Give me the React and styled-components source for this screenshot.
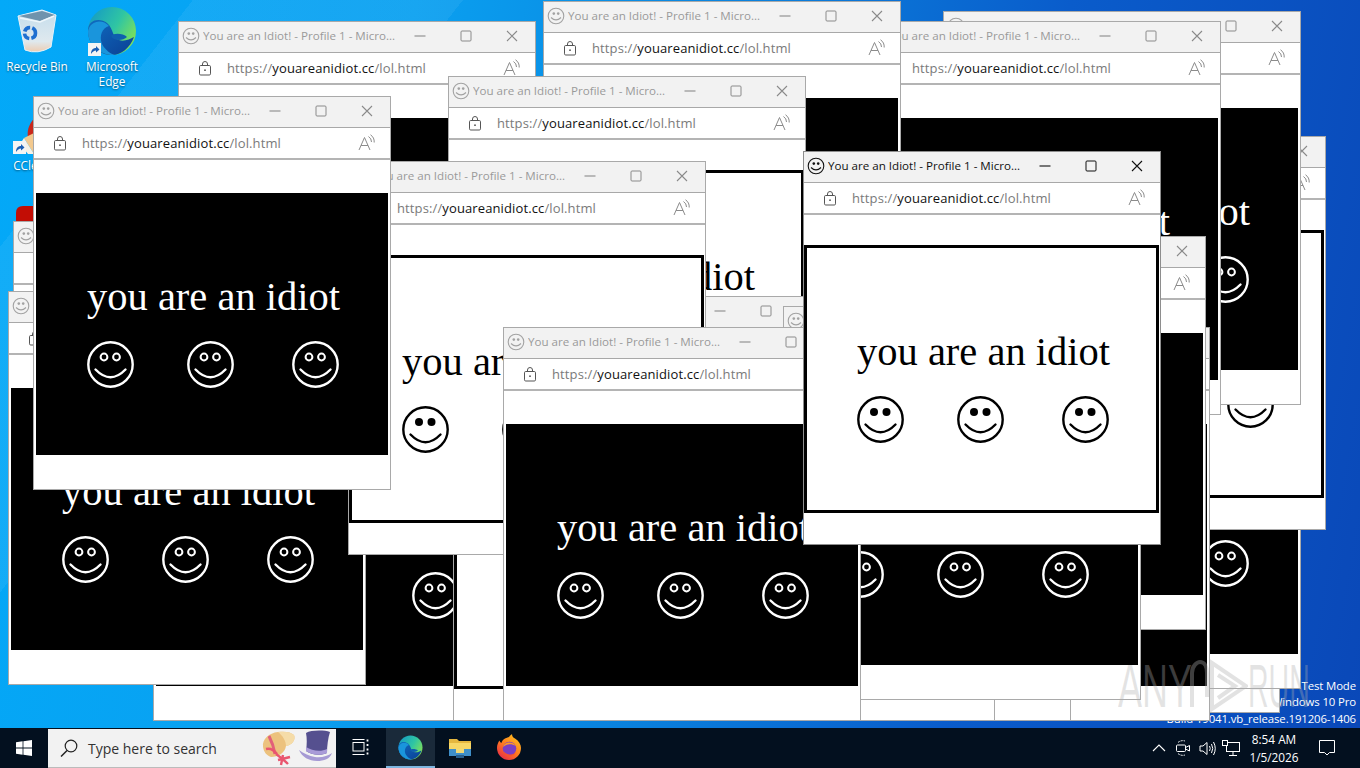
import styled, { createGlobalStyle } from "styled-components";

const GlobalStyle = createGlobalStyle`
  html, body {
    margin: 0;
    padding: 0;
    width: 1360px;
    height: 768px;
    overflow: hidden;
  }
  body {
    font-family: "Open Sans", "Noto Sans", "Liberation Sans", sans-serif;
  }
`;

const Screen = styled.div`
  width: 1360px;
  height: 768px;
  display: flex;
  flex-direction: column;
  overflow: hidden;
`;

const Desktop = styled.div`
  position: relative;
  flex: 1;
  overflow: hidden;
  background:
    linear-gradient(128deg, transparent 0 10%, rgba(255, 255, 255, 0.06) 10% 24%, transparent 24%),
    linear-gradient(100deg, #03a9f8 0%, #0aa0f0 28%, #0a7fdc 52%, #0a5ccb 72%, #0a48b8 100%);
`;

const DesktopIcon = styled.div`
  position: absolute;
  left: ${(p) => p.$x}px;
  top: ${(p) => p.$y}px;
  width: 74px;
  display: flex;
  flex-direction: column;
  align-items: center;
  color: #fff;
  font-size: 11.8px;
  line-height: 15px;
  text-align: center;
  text-shadow: 0 1px 2px rgba(0, 0, 0, 0.5);
`;

const IconLabel = styled.span`
  margin-top: ${(p) => p.$gap || 0}px;
`;

const Watermark = styled.div`
  position: absolute;
  left: 1118px;
  top: 654px;
  display: flex;
  align-items: center;
  font-family: "Liberation Sans", sans-serif;
  font-size: 62px;
  line-height: 64px;
  color: rgba(175, 175, 175, 0.34);
  pointer-events: none;
`;

const WatermarkWord = styled.span`
  display: block;
  width: ${(p) => p.$width}px;
  white-space: nowrap;
  transform: scaleX(${(p) => p.$scale});
  transform-origin: left center;
`;

const BuildInfo = styled.div`
  position: absolute;
  right: 4px;
  bottom: 1px;
  color: #fff;
  font-size: 11.4px;
  letter-spacing: -0.12px;
  line-height: 16.5px;
  text-align: right;
`;

/* ===== browser popup ===== */
const Win = styled.div`
  position: absolute;
  left: ${(p) => p.$x}px;
  top: ${(p) => p.$y}px;
  width: 358px;
  height: 394px;
  box-sizing: border-box;
  border: 1px solid ${(p) => (p.$active ? "#8e8e8e" : "#a9a9a9")};
  background: #fff;
  overflow: hidden;
`;

const TitleBar = styled.div`
  height: 27px;
  padding-bottom: 3px;
  display: flex;
  align-items: center;
  background: #f2f2f2;
  border-bottom: 1px solid #a8a8a8;
  color: ${(p) => (p.$active ? "#111" : "#9a9a9a")};
`;

const TabIcon = styled.span`
  width: 24px;
  padding-left: 3px;
  box-sizing: border-box;
  display: flex;
  flex: none;
`;

const TitleText = styled.span`
  flex: 1;
  font-size: 11.6px;
  white-space: nowrap;
  overflow: hidden;
`;

const WinButton = styled.span`
  width: 46px;
  height: 27px;
  flex: none;
  display: flex;
  align-items: center;
  justify-content: center;
  color: ${(p) => (p.$active ? "#111" : "#8a8a8a")};
`;

const AddressBar = styled.div`
  height: 29px;
  padding-bottom: 1px;
  display: flex;
  align-items: center;
  background: #fff;
  border-bottom: 2px solid #b4b4b4;
`;

const LockSlot = styled.span`
  width: 48px;
  padding-left: 19px;
  box-sizing: border-box;
  display: flex;
  flex: none;
`;

const Url = styled.span`
  flex: 1;
  font-size: 13px;
  letter-spacing: 0.12px;
  color: #7a7a7a;
  white-space: nowrap;
`;

const UrlHost = styled.span`
  color: #111;
`;

const ReadSlot = styled.span`
  width: 46px;
  display: flex;
  justify-content: center;
  flex: none;
`;

const PageWrap = styled.div`
  padding: 30px 0 0 ${(p) => (p.$dark ? 1 : 0)}px;
`;

const PageBox = styled.div`
  width: ${(p) => (p.$dark ? 354 : 355)}px;
  height: 268px;
  box-sizing: border-box;
  border-style: solid;
  border-width: ${(p) => (p.$dark ? "3px 1px" : "3px 3px")};
  border-color: ${(p) => (p.$dark ? "#fff" : "#000")};
  background: ${(p) => (p.$dark ? "#000" : "#fff")};
  color: ${(p) => (p.$dark ? "#fff" : "#000")};
  padding-left: ${(p) => (p.$dark ? 51 : 50)}px;
`;

const Slogan = styled.div`
  margin-top: 74px;
  font-family: "Liberation Serif", "Times New Roman", serif;
  font-size: 40.5px;
  line-height: 60px;
  white-space: nowrap;
`;

const SmileyRow = styled.div`
  margin-top: 14px;
  display: flex;
  svg:nth-child(2) {
    margin: 0 58px 0 53px;
  }
`;

/* ===== taskbar ===== */
const Taskbar = styled.div`
  height: 40px;
  flex: none;
  display: flex;
  align-items: stretch;
  background: #03101f;
  color: #fff;
`;

const StartButton = styled.div`
  width: 48px;
  display: flex;
  align-items: center;
  justify-content: center;
`;

const SearchBox = styled.div`
  width: 288px;
  margin-top: 1px;
  box-sizing: border-box;
  display: flex;
  align-items: center;
  background: #f2f2f2;
  color: #333;
  font-size: 14px;
  padding: 0 3px 0 12px;
  border-bottom: 1px solid #bbb;
`;

const SearchText = styled.span`
  margin-left: 10px;
  flex: 1;
  white-space: nowrap;
`;

const TaskButton = styled.div`
  width: 49.5px;
  display: flex;
  align-items: center;
  justify-content: center;
  box-sizing: border-box;
  background: ${(p) => (p.$current ? "#1a2a3a" : "transparent")};
  border-bottom: 2px solid ${(p) => (p.$current ? "#7fb6e0" : "transparent")};
`;

const Tray = styled.div`
  margin-left: auto;
  margin-right: 11px;
  display: flex;
  align-items: stretch;
`;

const TraySlot = styled.div`
  width: 24px;
  display: flex;
  align-items: center;
  justify-content: center;
`;

const Clock = styled.div`
  width: 62px;
  display: flex;
  flex-direction: column;
  justify-content: center;
  align-items: center;
  font-size: 11.8px;
  line-height: 18px;
`;

const NotifySlot = styled.div`
  width: 44px;
  display: flex;
  align-items: center;
  justify-content: center;
`;

/* ===== drawings ===== */
const TabSmiley = ({ active }) => {
  const c = active ? "#111" : "#a2a2a2";
  return (
    <svg width="18" height="18" viewBox="0 0 18 18" fill="none">
      <circle cx="9" cy="9" r="7.8" stroke={c} strokeWidth="1.1" />
      <circle cx="6.8" cy="6.6" r="1.3" fill={c} />
      <circle cx="11.2" cy="6.6" r="1.3" fill={c} />
      <path d="M4 10.5 Q9 15.2 14 10.5" stroke={c} strokeWidth="1.1" />
    </svg>
  );
};

const BigSmiley = ({ dark }) => {
  const c = dark ? "#fff" : "#000";
  return (
    <svg width="47" height="47" viewBox="0 0 47 47" fill="none" style={{ flex: "none" }}>
      <circle cx="23.5" cy="23.5" r="22.2" stroke={c} strokeWidth="2.4" />
      <circle cx="17" cy="16" r={dark ? 3.4 : 4} fill={dark ? "#000" : c} stroke={c} strokeWidth={dark ? 2 : 0} />
      <circle cx="29.5" cy="16" r={dark ? 3.4 : 4} fill={dark ? "#000" : c} stroke={c} strokeWidth={dark ? 2 : 0} />
      <path d="M8.5 28.5 Q23.5 44 38.5 28.5" stroke={c} strokeWidth="2.4" strokeLinecap="round" />
    </svg>
  );
};

const Minimize = () => (
  <svg width="12" height="12" viewBox="0 0 12 12" fill="none">
    <path d="M0.5 6H11.5" stroke="currentColor" strokeWidth="1.1" />
  </svg>
);

const Maximize = () => (
  <svg width="12" height="12" viewBox="0 0 12 12" fill="none">
    <rect x="1" y="1" width="10" height="10" rx="1" stroke="currentColor" />
  </svg>
);

const CloseX = () => (
  <svg width="12" height="12" viewBox="0 0 12 12" fill="none">
    <path d="M1 1L11 11M11 1L1 11" stroke="currentColor" strokeWidth="1.1" />
  </svg>
);

const Lock = () => (
  <svg width="14" height="16" viewBox="0 0 14 16" fill="none">
    <rect x="1.5" y="5.5" width="11" height="9.5" rx="1.2" stroke="#555" />
    <path d="M4.5 5.5V4a2.5 2.5 0 0 1 5 0v1.5" stroke="#555" />
    <circle cx="7" cy="10.2" r="0.9" fill="#555" />
  </svg>
);

const ReadAloud = () => (
  <svg width="18" height="17" viewBox="0 0 18 17" fill="none" stroke="#8b8b8b" strokeWidth="1">
    <path d="M1 16L6.5 3.5L12 16M3 11.5H10" />
    <path d="M10.5 2.5Q13.5 4.5 13.5 8M12.5 0.8Q16.5 3.5 16.2 8.5" />
  </svg>
);

const RecycleBin = () => (
  <svg width="42" height="44" viewBox="0 0 42 44">
    <defs>
      <linearGradient id="binBody" x1="0" y1="0" x2="0" y2="1">
        <stop offset="0" stopColor="#c3dcec" />
        <stop offset="0.75" stopColor="#dfe9ee" />
        <stop offset="1" stopColor="#eeccb0" />
      </linearGradient>
    </defs>
    <path d="M2 7L26 1L40 6L35 38Q22 46 9 41Z" fill="url(#binBody)" stroke="#e6f2f9" />
    <path d="M3 7L26 2L39 6L24 12Z" fill="#6f93ad" />
    <path d="M4 9L24 13L38 7" fill="none" stroke="#eef6fb" strokeWidth="1.4" />
    <circle cx="14" cy="24" r="5.5" fill="none" stroke="#1f6fd0" strokeWidth="3.6" strokeDasharray="7 2.2" />
  </svg>
);

const EdgeLogo = ({ size = 50 }) => (
  <svg width={size} height={size} viewBox="0 0 50 50">
    <defs>
      <linearGradient id="edgeTop" x1="0" y1="0" x2="1" y2="0.6">
        <stop offset="0" stopColor="#1295c9" />
        <stop offset="0.6" stopColor="#2fc5a3" />
        <stop offset="1" stopColor="#7ce05b" />
      </linearGradient>
      <linearGradient id="edgeLow" x1="0" y1="0" x2="1" y2="1">
        <stop offset="0" stopColor="#0f6cc0" />
        <stop offset="1" stopColor="#0b3f94" />
      </linearGradient>
    </defs>
    <circle cx="25" cy="25" r="24" fill="url(#edgeTop)" />
    <path d="M1 25C1 12 14 12 20 17C27 23 25 32 32 34C37 36 43 33 47 31C43 42 34 49 25 49C11 49 1 38 1 25Z" fill="url(#edgeLow)" />
    <path d="M1 25C3 15 15 12 22 20C15 22 12 30 15 38C18 44 24 48 28 49C14 50 1 40 1 25Z" fill="#1a95dc" />
    <path d="M24 30C26 27 36 27 40 31C36 35 26 35 24 30Z" fill="#0f5fae" />
  </svg>
);

const Shortcut = () => (
  <svg width="13" height="13" viewBox="0 0 13 13">
    <rect width="13" height="13" fill="#f4f4f4" />
    <path d="M3 11C3 7 5 5 8 5V3L11.5 6.5L8 9.5V7.5C6 7.5 4.5 9 3 11Z" fill="#1b5fb5" />
  </svg>
);

const ShortcutSlot = styled.span`
  position: absolute;
  left: ${(p) => p.$x}px;
  top: ${(p) => p.$y}px;
  display: flex;
`;

const CleanerIcon = () => (
  <svg width="44" height="44" viewBox="0 0 44 44">
    <path d="M14 32C8 20 14 6 26 2C38 2 44 12 42 26L30 40Z" fill="#c9271b" />
    <path d="M8 26L28 16L38 32L18 42Z" fill="#f3c98e" />
    <path d="M8 26L18 42L12 42L4 32Z" fill="#f7f2e8" />
  </svg>
);

const RedTile = () => (
  <svg width="42" height="16" viewBox="0 0 42 16">
    <path d="M0 16V7Q0 0 7 0H42V16Z" fill="#c20d05" />
  </svg>
);

const WindowsLogo = () => (
  <svg width="16" height="16" viewBox="0 0 16 16" fill="#fff">
    <path d="M0 2.3L6.6 1.3V7.5H0ZM7.4 1.2L16 0V7.5H7.4ZM0 8.4H6.6V14.7L0 13.7ZM7.4 8.4H16V16L7.4 14.8Z" />
  </svg>
);

const Magnifier = () => (
  <svg width="18" height="18" viewBox="0 0 18 18" fill="none" stroke="#222" strokeWidth="1.2">
    <circle cx="11" cy="7" r="5.8" />
    <path d="M7 11.5L1 17.5" strokeWidth="1.5" />
  </svg>
);

const SearchHats = () => (
  <svg width="72" height="38" viewBox="0 0 72 38" style={{ flex: "none" }}>
    <path d="M2 18C1 10 8 4 17 3C24 2 30 3 33 6C35 11 31 16 25 17C24 24 17 28 10 28C5 26 3 23 2 18Z" fill="#ecc27e" />
    <path d="M17 3C24 2 30 3 33 6C35 11 31 16 25 17C25 12 22 7 17 3Z" fill="#f5dca8" />
    <path d="M8 7C11 13 13 19 14 25" stroke="#e2607a" strokeWidth="3" fill="none" />
    <path d="M5 20C9 19 13 21 16 25M15 25C19 28 23 31 27 35M22 26L20 36M17 31L29 28" stroke="#e9566f" strokeWidth="2.4" fill="none" />
    <path d="M45 22C46 15 46 9 45 4C50 1 63 1 69 3C67 9 66 17 66 24C60 27 50 26 45 22Z" fill="#55508f" />
    <path d="M45 18C51 22 60 23 66 20L66 24C60 27 50 26 45 22Z" fill="#a99bd8" />
    <path d="M38 21C41 28 48 32 56 32C63 32 69 30 71 24C67 27 60 29 54 28C48 27 42 24 38 21Z" fill="#a69ad4" />
  </svg>
);

const TaskView = () => (
  <svg width="17" height="16" viewBox="0 0 17 16" fill="none" stroke="#fff">
    <path d="M0.5 0.5H12.5M0.5 15.5H12.5" />
    <rect x="1" y="3.5" width="11" height="8.5" />
    <path d="M15.5 0.5V2.5M15.5 5V7M15.5 9.5V11.5M15.5 13.5V15.5" strokeWidth="1.8" />
  </svg>
);

const FolderIcon = () => (
  <svg width="24" height="22" viewBox="0 0 24 22">
    <path d="M1 3H9L11 5H23V20H1Z" fill="#e5b73f" />
    <path d="M1 7H23V20H1Z" fill="#f7d766" />
    <path d="M1 13H23V20H1Z" fill="#3f8fc9" />
    <rect x="8" y="13" width="8" height="4" fill="#f1d977" />
    <rect x="8" y="19" width="8" height="3" fill="#2a5f8d" />
  </svg>
);

const FirefoxIcon = () => (
  <svg width="24" height="26" viewBox="0 0 24 26">
    <defs>
      <linearGradient id="foxFire" x1="0.8" y1="0" x2="0.1" y2="1">
        <stop offset="0" stopColor="#ffc21e" />
        <stop offset="0.5" stopColor="#ff7a1f" />
        <stop offset="1" stopColor="#e6204e" />
      </linearGradient>
    </defs>
    <path d="M12 3C13 1.5 14 1 15 0C15 2 16 3.5 18 4.5C22 7 24 10.5 24 14A12 12 0 0 1 0 14C0 11 1 8.5 2.5 6.5C3 8 3.5 8.5 4.5 9C5 6 8 4 12 3Z" fill="url(#foxFire)" />
    <circle cx="12.5" cy="14.5" r="6.8" fill="#7b3fc4" />
    <path d="M6 13C9 10 14 9 19 12C17 9 14 8 11 8.5C8 9 6.5 11 6 13Z" fill="#ff9a24" />
    <path d="M6.5 17C9 21 15 22 19 18C17 23 8 24 6.5 17Z" fill="#f8522d" />
  </svg>
);

const TrayChevron = () => (
  <svg width="14" height="8" viewBox="0 0 14 8" fill="none" stroke="#fff" strokeWidth="1.1">
    <path d="M1 7L7 1L13 7" />
  </svg>
);

const TrayMeet = () => (
  <svg width="16" height="16" viewBox="0 0 16 16" fill="none" stroke="#fff">
    <path d="M3 2.5A7 7 0 0 1 10 1M3 13.5A7 7 0 0 0 10 15" strokeDasharray="2 1" />
    <rect x="1.5" y="5" width="9" height="6.5" rx="1" />
    <path d="M10.5 7.5L14.5 5.5V11L10.5 9" />
  </svg>
);

const TrayVolume = () => (
  <svg width="17" height="15" viewBox="0 0 17 15" fill="none" stroke="#fff">
    <path d="M1 5H4L8 1.5V13.5L4 10H1Z" />
    <path d="M10.5 5Q12 7.5 10.5 10M12.5 3Q15 7.5 12.5 12M14.5 1Q18 7.5 14.5 14" />
  </svg>
);

const TrayNetwork = () => (
  <svg width="18" height="16" viewBox="0 0 18 16" fill="none" stroke="#fff">
    <rect x="4.5" y="2.5" width="13" height="9" />
    <path d="M11 11.5V15M7 15.5H15" />
    <rect x="0.5" y="0.5" width="5" height="5" fill="#03101f" />
  </svg>
);

const TrayNotify = () => (
  <svg width="16" height="16" viewBox="0 0 16 16" fill="none" stroke="#fff">
    <path d="M0.5 0.5H15.5V12.5H10.5L8 15L5.5 12.5H0.5Z" />
  </svg>
);

const AnyRunMark = () => (
  <svg width="58" height="58" viewBox="0 0 58 58" fill="none" stroke="rgba(175,175,175,0.36)" strokeWidth="4" style={{ flex: "none" }}>
    <path d="M2 50V16C2 9 7 5 10 5C14 5 17 9 17 16V40" />
    <path d="M22 6L56 29L22 52Z" />
    <path d="M28 18L45 29L28 41" />
  </svg>
);

/* bottom to top, in the order the popups were opened */
const WINDOWS = [
  { x: 922, y: 319, dark: true },
  { x: 943, y: 295, dark: true },
  { x: 968, y: 136, dark: false },
  { x: 943, y: 11, dark: true },
  { x: 863, y: 21, dark: true },
  { x: 543, y: 1, dark: true },
  { x: 178, y: 21, dark: true },
  { x: 852, y: 327, dark: true },
  { x: 848, y: 236, dark: true },
  { x: 713, y: 327, dark: true },
  { x: 637, y: 327, dark: true },
  { x: 448, y: 76, dark: false },
  { x: 478, y: 296, dark: false },
  { x: 13, y: 221, dark: true },
  { x: 153, y: 327, dark: true },
  { x: 453, y: 327, dark: false },
  { x: 783, y: 306, dark: true },
  { x: 8, y: 291, dark: true },
  { x: 348, y: 161, dark: false },
  { x: 33, y: 96, dark: true },
  { x: 503, y: 327, dark: true },
  { x: 803, y: 151, dark: false, active: true },
];

function IdiotWindow({ x, y, dark, active }) {
  return (
    <Win $x={x} $y={y} $active={active}>
      <TitleBar $active={active}>
        <TabIcon>
          <TabSmiley active={active} />
        </TabIcon>
        <TitleText>You are an Idiot! - Profile 1 - Micro...</TitleText>
        <WinButton $active={active}>
          <Minimize />
        </WinButton>
        <WinButton $active={active}>
          <Maximize />
        </WinButton>
        <WinButton $active={active}>
          <CloseX />
        </WinButton>
      </TitleBar>
      <AddressBar>
        <LockSlot>
          <Lock />
        </LockSlot>
        <Url>
          https://<UrlHost>youareanidiot.cc</UrlHost>/lol.html
        </Url>
        <ReadSlot>
          <ReadAloud />
        </ReadSlot>
      </AddressBar>
      <PageWrap $dark={dark}>
        <PageBox $dark={dark}>
          <Slogan>you are an idiot</Slogan>
          <SmileyRow>
            <BigSmiley dark={dark} />
            <BigSmiley dark={dark} />
            <BigSmiley dark={dark} />
          </SmileyRow>
        </PageBox>
      </PageWrap>
    </Win>
  );
}

export default function App() {
  return (
    <Screen>
      <GlobalStyle />
      <Desktop>
        <DesktopIcon $x={0} $y={9}>
          <RecycleBin />
          <IconLabel $gap={6}>Recycle Bin</IconLabel>
        </DesktopIcon>
        <DesktopIcon $x={75} $y={6}>
          <EdgeLogo />
          <IconLabel $gap={3}>Microsoft Edge</IconLabel>
          <ShortcutSlot $x={13} $y={37}>
            <Shortcut />
          </ShortcutSlot>
        </DesktopIcon>
        <DesktopIcon $x={1} $y={112}>
          <CleanerIcon />
          <IconLabel $gap={2}>CCleaner</IconLabel>
          <ShortcutSlot $x={12} $y={29}>
            <Shortcut />
          </ShortcutSlot>
        </DesktopIcon>
        <DesktopIcon $x={0} $y={206}>
          <RedTile />
        </DesktopIcon>

        <BuildInfo>
          Test Mode
          <br />
          Windows 10 Pro
          <br />
          Build 19041.vb_release.191206-1406
        </BuildInfo>

        {WINDOWS.map((w) => (
          <IdiotWindow key={`${w.x}-${w.y}`} {...w} />
        ))}

        <Watermark>
          <WatermarkWord $width={72} $scale={0.58}>ANY</WatermarkWord>
          <AnyRunMark />
          <WatermarkWord $width={62} $scale={0.46}>RUN</WatermarkWord>
        </Watermark>
      </Desktop>

      <Taskbar>
        <StartButton>
          <WindowsLogo />
        </StartButton>
        <SearchBox>
          <Magnifier />
          <SearchText>Type here to search</SearchText>
          <SearchHats />
        </SearchBox>
        <TaskButton>
          <TaskView />
        </TaskButton>
        <TaskButton $current>
          <EdgeLogo size={25} />
        </TaskButton>
        <TaskButton>
          <FolderIcon />
        </TaskButton>
        <TaskButton>
          <FirefoxIcon />
        </TaskButton>
        <Tray>
          <TraySlot>
            <TrayChevron />
          </TraySlot>
          <TraySlot>
            <TrayMeet />
          </TraySlot>
          <TraySlot>
            <TrayVolume />
          </TraySlot>
          <TraySlot>
            <TrayNetwork />
          </TraySlot>
          <Clock>
            <span>8:54 AM</span>
            <span>1/5/2026</span>
          </Clock>
          <NotifySlot>
            <TrayNotify />
          </NotifySlot>
        </Tray>
      </Taskbar>
    </Screen>
  );
}
